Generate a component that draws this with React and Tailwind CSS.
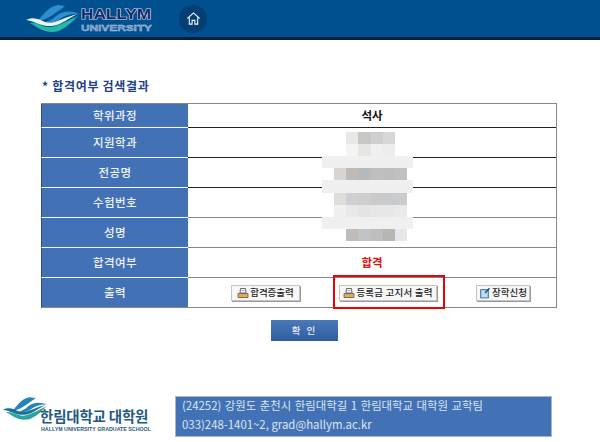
const font = "[font-family:'Noto_Sans_CJK_KR','Noto_Sans',sans-serif]";

const rows = [
  { label: "학위과정", value: "석사", border: "border-[#222]", h: "h-6" },
  { label: "지원학과", border: "border-[#222]", h: "h-[30px]" },
  { label: "전공명", border: "border-[#222]", h: "h-[30px]" },
  { label: "수험번호", border: "border-[#888]", h: "h-[30px]" },
  { label: "성명", border: "border-[#888]", h: "h-[30px]" },
  { label: "합격여부", pass: true, border: "border-[#888]", h: "h-[30px]" },
];

const mosaic = [
  { w: "w-[49px]", ml: "ml-6", c: ["#e8e8e6", "#c9c7c5", "#cdcfd1", "#d6d8d8"] },
  { w: "w-[49px]", ml: "ml-6", c: ["#f4f4f2", "#e6e7e5", "#eef0f2", "#ecedee"] },
  { w: "w-[91px]", ml: "ml-0", c: ["#f0f0f0"] },
  { w: "w-[73px]", ml: "ml-3", c: ["#d7d6d5", "#c0bbb7", "#b5babd", "#c0bfbf", "#c0bebd", "#c1c0c2"] },
  { w: "w-[91px]", ml: "ml-0", c: ["#f0f0f0"] },
  { w: "w-[73px]", ml: "ml-3", c: ["#dfdeda", "#d0d0d2", "#cececf", "#c9caca", "#c9cacb", "#cacbce"] },
  { w: "w-[73px]", ml: "ml-3", c: ["#f0f0f0", "#e9e9e9", "#e3e4e4", "#e7e7e7", "#e7e7e7", "#e9eaea"] },
  { w: "w-[91px]", ml: "ml-0", c: ["#f0f0f0"] },
  { w: "w-[61px]", ml: "ml-6", c: ["#c0bcb9", "#c0c4c7", "#c0bebd", "#b8b6b3", "#e6e7ea"] },
];

function Wave({ className, a, b, c }) {
  return (
    <svg viewBox="0 0 54 27" className={className}>
      <path d="M32 0C24 1 18 8 11 17C18 15 24 12 28 9C32 6 36 4 39 1Z" fill={a} />
      <path d="M30 11C36 6 44 5 54 9C46 8 40 10 34 14C28 18 22 19 16 18C21 17 26 15 30 11Z" fill={a} />
      <path d="M0 15C8 11 14 15 19 17C28 20 38 12 52 9C44 12 36 20 26 21C16 22 8 16 0 15Z" fill={c} />
      <path d="M4 18C10 17 15 21 21 22C31 23 40 16 52 11C44 19 36 27 26 27C16 27 10 21 4 18Z" fill={b} />
    </svg>
  );
}

function Printer() {
  return (
    <svg viewBox="0 0 12 12" className="w-3 h-3 shrink-0">
      <path d="M3.5 1.5H8.5L9 6H3Z" fill="#fff" stroke="#555" strokeWidth="0.9" />
      <path d="M1 6.5H11V10.5H1Z" fill="#e9a94b" stroke="#666" strokeWidth="0.9" />
      <path d="M4.5 3.5H7.5" stroke="#888" strokeWidth="0.8" />
    </svg>
  );
}

function Note() {
  return (
    <svg viewBox="0 0 12 12" className="w-3 h-3 shrink-0">
      <path d="M1.5 2.5H9.5V11H1.5Z" fill="#9cc3e4" stroke="#3c6c9c" strokeWidth="0.8" />
      <path d="M3 5H8M3 7H8M3 9H8" stroke="#fff" strokeWidth="0.8" />
      <path d="M6 6L10.5 1.2" stroke="#1c4f90" strokeWidth="1.5" />
    </svg>
  );
}

function Btn({ icon, children, className = "" }) {
  return (
    <button className={`h-4 flex items-center justify-center gap-px bg-[#f7f7f7] border border-[#c4c4c4] shadow-[1px_1px_0_#999] text-[9.5px] font-medium leading-none text-[#222] whitespace-nowrap ${className}`}>
      {icon}
      <span>{children}</span>
    </button>
  );
}

export default function App() {
  return (
    <div className={`${font} relative w-[600px] h-[442px] bg-white overflow-hidden`}>
      <header className="h-10 bg-[#00508f] border-b-[3px] border-[#0b1c3a] flex items-center pl-[26px]">
        <Wave className="w-[54px] h-[27px]" a="#2d8fce" b="#25b8a8" c="#e6f6f2" />
        <svg viewBox="0 0 74 28" className="w-[74px] h-[28px]">
          <text x="1" y="14" fontFamily="Liberation Sans" fontWeight="700" fontSize="14.5" textLength="70" lengthAdjust="spacingAndGlyphs" fill="#12296a" stroke="#d2ddef" strokeWidth="1.2" paintOrder="stroke">HALLYM</text>
          <text x="1" y="26" fontFamily="Liberation Sans" fontWeight="700" fontSize="9.5" textLength="71" lengthAdjust="spacingAndGlyphs" fill="#6b8dbd" stroke="#b9c9e2" strokeWidth="0.4">UNIVERSITY</text>
        </svg>
        <div className="ml-[25px] w-7 h-7 rounded-full bg-[#043f74] flex items-center justify-center">
          <svg viewBox="0 0 16 16" className="w-[15px] h-[15px]" fill="none" stroke="#fff" strokeWidth="1.1">
            <path d="M1.5 8L8 2L14.5 8" />
            <path d="M3.5 7V14H6.5V10H9.5V14H12.5V7" />
          </svg>
        </div>
      </header>

      <main className="pl-[41px] w-[557px]">
        <h2 className="mt-[35px] h-7 pl-px pb-[6px] flex items-center text-[12px] font-semibold text-[#1f3f8a] tracking-[0.7px] leading-none">
          * 합격여부 검색결과
        </h2>
        <div className="border-t border-r border-[#888] text-[11.5px] leading-none">
          {rows.map((r) => (
            <div key={r.label} className={`flex ${r.h}`}>
              <div className="w-[147px] shrink-0 bg-[#4272b5] border-l border-[#2f4f7f] border-b border-b-white text-[#f0f4fa] flex items-center justify-center font-medium tracking-[0.4px]">
                {r.label}
              </div>
              <div className={`flex-1 border-b ${r.border} flex items-center justify-center font-bold`}>
                {r.value && <span className="text-[#111]">{r.value}</span>}
                {r.pass && <span className="text-[#e01010]">합격</span>}
              </div>
            </div>
          ))}
          <div className="flex h-[30px]">
            <div className="w-[147px] shrink-0 bg-[#4272b5] border-l border-[#2f4f7f] border-b border-b-[#888] text-[#f0f4fa] flex items-center justify-center font-medium tracking-[0.4px]">
              출력
            </div>
            <div className="flex-1 border-b border-[#888] flex items-center pl-[43px]">
              <Btn icon={<Printer />} className="w-[69px]">합격증출력</Btn>
              <Btn icon={<Printer />} className="w-[98px] ml-[39px] tracking-[0.2px]">등록금 고지서 출력</Btn>
              <Btn icon={<Note />} className="w-[54px] ml-[39px]">장학신청</Btn>
            </div>
          </div>
        </div>
        <div className="pl-[230px] mt-[12px]">
          <button className="block w-[67px] h-[21px] bg-gradient-to-b from-[#4a7ab9] to-[#2f5c9d] text-[#e8eef7] text-[9.5px] font-medium tracking-[2px]">
            확 인
          </button>
        </div>
      </main>

      <footer className="absolute left-0 top-[396px] w-[552px] flex items-start">
        <div className="w-[175px] shrink-0 relative h-[41px]">
          <Wave className="absolute left-[3px] top-0 w-[45px] h-[25px]" a="#2784b8" b="#2aa59c" c="#1a6f9c" />
          <div className="absolute left-[40px] top-[13px] text-[14.5px] font-bold leading-none text-[#1f5a80] whitespace-nowrap tracking-[-0.2px]">한림대학교 대학원</div>
          <div className="absolute left-[41px] top-[31px] text-[5.3px] font-semibold leading-none text-[#2a5a78] whitespace-nowrap [font-family:'Liberation_Sans',sans-serif]">HALLYM UNIVERSITY GRADUATE SCHOOL</div>
        </div>
        <div className="flex-1 h-[41px] bg-[#4272b5] border border-[#a9b6c6] pl-[6px] pb-[3px] flex flex-col justify-center text-[#dce6f3] text-[11.4px] leading-[19px] whitespace-nowrap">
          <div className="[word-spacing:1px]">(24252) 강원도 춘천시 한림대학길 1 한림대학교 대학원 교학팀</div>
          <div>033)248-1401~2, grad@hallym.ac.kr</div>
        </div>
      </footer>

      {/* 가려진 개인정보 모자이크 */}
      <div className="absolute left-[322px] top-[132px] w-[91px] flex flex-col">
        {mosaic.map((m, i) => (
          <div key={i} className={`${m.w} ${m.ml} h-[12.11px] flex`}>
            {m.c.map((col, j) => (
              <div key={j} className="flex-1" style={{ background: col }} />
            ))}
          </div>
        ))}
      </div>

      {/* 강조 표시 */}
      <div className="absolute left-[333px] top-[275px] w-[112px] h-[34px] border-2 border-[#f00000]" />
    </div>
  );
}
